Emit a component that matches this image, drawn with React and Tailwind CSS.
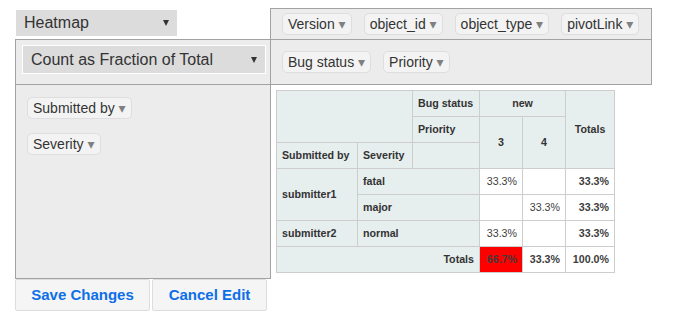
import React from "react";

const unusedAttrs = ["Version", "object_id", "object_type", "pivotLink"];
const colAttrs = ["Bug status", "Priority"];
const rowAttrs = ["Submitted by", "Severity"];

function Attr({ name }) {
  return (
    <span className="inline-block whitespace-nowrap bg-[#f3f3f3] border border-[#dedede] rounded-[5px] px-[5px] h-[22px] leading-[20px] text-[14px] text-[#333]">
      {name} <span className="text-[#808080] text-[14px]">▾</span>
    </span>
  );
}

function Caret() {
  return (
    <svg width="6" height="6" viewBox="0 0 6 6" className="shrink-0">
      <polygon points="0,0 6,0 3,6" fill="#333" />
    </svg>
  );
}

function FakeSelect({ label, className }) {
  return (
    <div
      className={`flex items-center justify-between bg-[#dcdcdc] text-[16px] text-[#333] pl-[8px] pr-[8px] ${className}`}
    >
      <span>{label}</span>
      <Caret />
    </div>
  );
}

const th = "bg-[#e6eeee] border border-[#cdcdcd] px-[5px] py-[5px] leading-[15px] font-bold text-[#333] text-left";
const td = "bg-white border border-[#cdcdcd] px-[5px] py-[5px] leading-[15px] text-[#3d3d3d] text-right align-top";

function PivotTable() {
  return (
    <table className="border-collapse table-fixed w-[339px] text-[10.67px]">
      <colgroup>
        <col className="w-[81px]" />
        <col className="w-[55px]" />
        <col className="w-[67px]" />
        <col className="w-[43px]" />
        <col className="w-[43px]" />
        <col className="w-[49px]" />
      </colgroup>
      <thead>
        <tr>
          <th className={th} colSpan={2} rowSpan={2}></th>
          <th className={th}>Bug status</th>
          <th className={`${th} !text-center`} colSpan={2}>new</th>
          <th className={`${th} !text-center`} rowSpan={3}>Totals</th>
        </tr>
        <tr>
          <th className={th}>Priority</th>
          <th className={`${th} !text-center`} rowSpan={2}>3</th>
          <th className={`${th} !text-center`} rowSpan={2}>4</th>
        </tr>
        <tr>
          <th className={th}>Submitted by</th>
          <th className={th}>Severity</th>
          <th className={th}></th>
        </tr>
      </thead>
      <tbody>
        <tr>
          <th className={th} rowSpan={2}>submitter1</th>
          <th className={th} colSpan={2}>fatal</th>
          <td className={td}>33.3%</td>
          <td className={td}></td>
          <td className={`${td} font-bold`}>33.3%</td>
        </tr>
        <tr>
          <th className={th} colSpan={2}>major</th>
          <td className={td}></td>
          <td className={td}>33.3%</td>
          <td className={`${td} font-bold`}>33.3%</td>
        </tr>
        <tr>
          <th className={th}>submitter2</th>
          <th className={th} colSpan={2}>normal</th>
          <td className={td}>33.3%</td>
          <td className={td}></td>
          <td className={`${td} font-bold`}>33.3%</td>
        </tr>
        <tr>
          <th className={`${th} !text-right`} colSpan={3}>Totals</th>
          <td className={`${td} font-bold !bg-[#ff0000]`}>66.7%</td>
          <td className={`${td} font-bold`}>33.3%</td>
          <td className={`${td} font-bold`}>100.0%</td>
        </tr>
      </tbody>
    </table>
  );
}

export default function App() {
  return (
    <div className="w-[673px] h-[321px] bg-white pt-[8px] pl-[15px] font-['Liberation_Sans','DejaVu_Sans',Arial,sans-serif]">
      {/* renderer + unused attrs */}
      <div className="flex">
        <div className="w-[255px] h-[32px] pt-[2px] pl-[1px]">
          <FakeSelect label="Heatmap" className="w-[161px] h-[26px]" />
        </div>
        <div className="w-[382px] h-[32px] border border-[#a2a2a2] bg-[#ececec] flex items-center gap-[12px] pl-[11px]">
          {unusedAttrs.map((a) => (
            <Attr key={a} name={a} />
          ))}
        </div>
      </div>

      {/* aggregator + col attrs */}
      <div className="flex -mt-px">
        <div className="w-[256px] h-[46px] border border-[#a2a2a2] bg-[#ececec] pl-[6px] pt-[5px]">
          <FakeSelect
            label="Count as Fraction of Total"
            className="w-[244px] h-[29px] border border-white"
          />
        </div>
        <div className="w-[382px] h-[46px] -ml-px border border-[#a2a2a2] bg-[#ececec] flex items-center gap-[12px] pl-[11px]">
          {colAttrs.map((a) => (
            <Attr key={a} name={a} />
          ))}
        </div>
      </div>

      {/* row attrs + output */}
      <div className="flex -mt-px">
        <div className="w-[256px] h-[195px] border border-[#a2a2a2] bg-[#ececec] flex flex-col items-start gap-[14px] pl-[11px] pt-[12px]">
          {rowAttrs.map((a) => (
            <Attr key={a} name={a} />
          ))}
        </div>
        <div className="-ml-px pl-[6px] pt-[6px]">
          <PivotTable />
        </div>
      </div>

      {/* buttons */}
      <div className="flex gap-[2px] mt-0">
        <button className="w-[135px] h-[32px] bg-[#f5f5f5] border border-[#dddddd] rounded-[2px] text-[15px] font-bold text-[#0d6fe8]">
          Save Changes
        </button>
        <button className="w-[115px] h-[32px] bg-[#f5f5f5] border border-[#dddddd] rounded-[2px] text-[15px] font-bold text-[#0d6fe8]">
          Cancel Edit
        </button>
      </div>
    </div>
  );
}
